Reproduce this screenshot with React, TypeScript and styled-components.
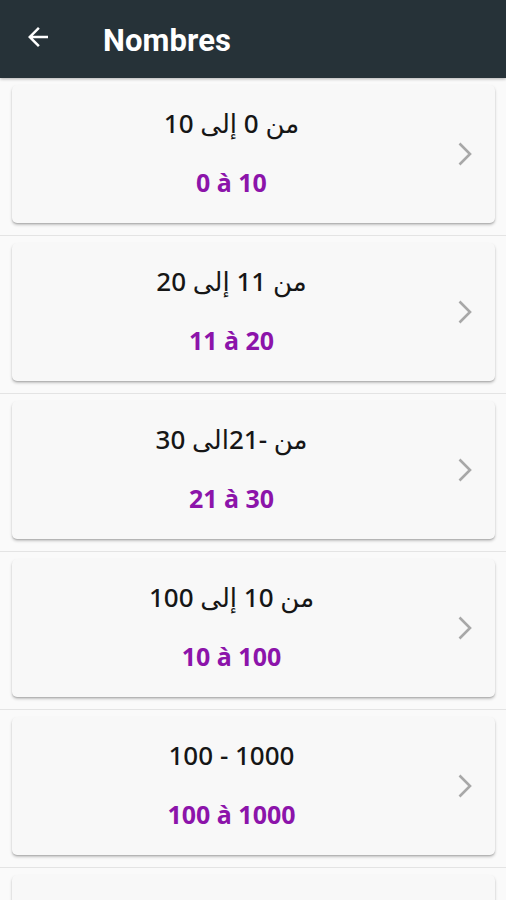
import React from 'react';
import styled, { createGlobalStyle } from 'styled-components';

interface NumberRange {
  id: number;
  arabic: string;
  french: string;
}

const ranges: NumberRange[] = [
  { id: 1, arabic: 'من 0 إلى 10', french: '0 à 10' },
  { id: 2, arabic: 'من 11 إلى 20', french: '11 à 20' },
  { id: 3, arabic: 'من -21الى 30', french: '21 à 30' },
  { id: 4, arabic: 'من 10 إلى 100', french: '10 à 100' },
  { id: 5, arabic: '100 - 1000', french: '100 à 1000' },
  { id: 6, arabic: '', french: '' },
];

const App = () => {
  return (
    <>
      <GlobalStyle />
      <Screen>
        <TopBar>
          <BackButton aria-label="retour">
            <svg width="30" height="30" viewBox="0 0 24 24">
              <path
                d="M20 11H7.83l5.59-5.59L12 4l-8 8 8 8 1.41-1.41L7.83 13H20v-2z"
                fill="#fff"
              />
            </svg>
          </BackButton>
          <Title>Nombres</Title>
        </TopBar>
        <List>
          {ranges.map((r) => (
            <Row key={r.id}>
              <Card>
                <Texts>
                  <ArabicLabel dir="auto">{r.arabic}</ArabicLabel>
                  <FrenchLabel>{r.french}</FrenchLabel>
                </Texts>
                <Chevron viewBox="0 0 16 26">
                  <path
                    d="M2.5 2.5l10.5 10.5L2.5 23.5"
                    fill="none"
                    stroke="#a8a8a8"
                    strokeWidth="2.6"
                  />
                </Chevron>
              </Card>
            </Row>
          ))}
        </List>
      </Screen>
    </>
  );
};

const GlobalStyle = createGlobalStyle`
  html, body {
    margin: 0;
    padding: 0;
    background: #fafafa;
    font-family: "Noto Sans", Roboto, "DejaVu Sans", sans-serif;
  }
`;

const Screen = styled.div`
  width: 506px;
  height: 900px;
  overflow: hidden;
  background: #fafafa;
`;

const TopBar = styled.header`
  height: 78px;
  background: #263238;
  display: flex;
  align-items: center;
  box-sizing: border-box;
  box-shadow: 0 1px 3px rgba(0, 0, 0, 0.3);
  position: relative;
  z-index: 1;
`;

const BackButton = styled.div`
  width: 30px;
  height: 30px;
  margin: 0 0 4px 23px;
  display: flex;
`;

const Title = styled.h1`
  margin: 3px 0 0 50px;
  color: #fff;
  font-family: Roboto, "Noto Sans", sans-serif;
  font-size: 31px;
  font-weight: 700;
  letter-spacing: 0.1px;
`;

const List = styled.div`
  display: flex;
  flex-direction: column;
`;

const Row = styled.div`
  padding: 7px 11px 12px 12px;
  border-bottom: 1px solid #e4e4e4;
`;

const Card = styled.div`
  height: 138px;
  background: #f8f8f8;
  border-radius: 5px;
  box-shadow: 0 1px 1px rgba(0, 0, 0, 0.12), 0 2px 3px rgba(0, 0, 0, 0.22);
  display: flex;
  align-items: center;
`;

const Texts = styled.div`
  flex: 1;
  display: flex;
  flex-direction: column;
  align-items: center;
  gap: 22px;
  padding-left: 14px;
  margin-top: -3px;
`;

const ArabicLabel = styled.div`
  font-family: "Noto Sans", "DejaVu Sans", sans-serif;
  font-size: 26px;
  font-weight: 500;
  color: #161616;
  height: 36px;
  line-height: 36px;
`;

const FrenchLabel = styled.div`
  font-family: "Noto Sans", sans-serif;
  font-size: 25px;
  font-weight: 700;
  color: #8c14aa;
  height: 36px;
  line-height: 36px;
  margin-top: 1px;
`;

const Chevron = styled.svg`
  width: 16px;
  height: 26px;
  margin: 0 22px 0 20px;
`;

export default App;
